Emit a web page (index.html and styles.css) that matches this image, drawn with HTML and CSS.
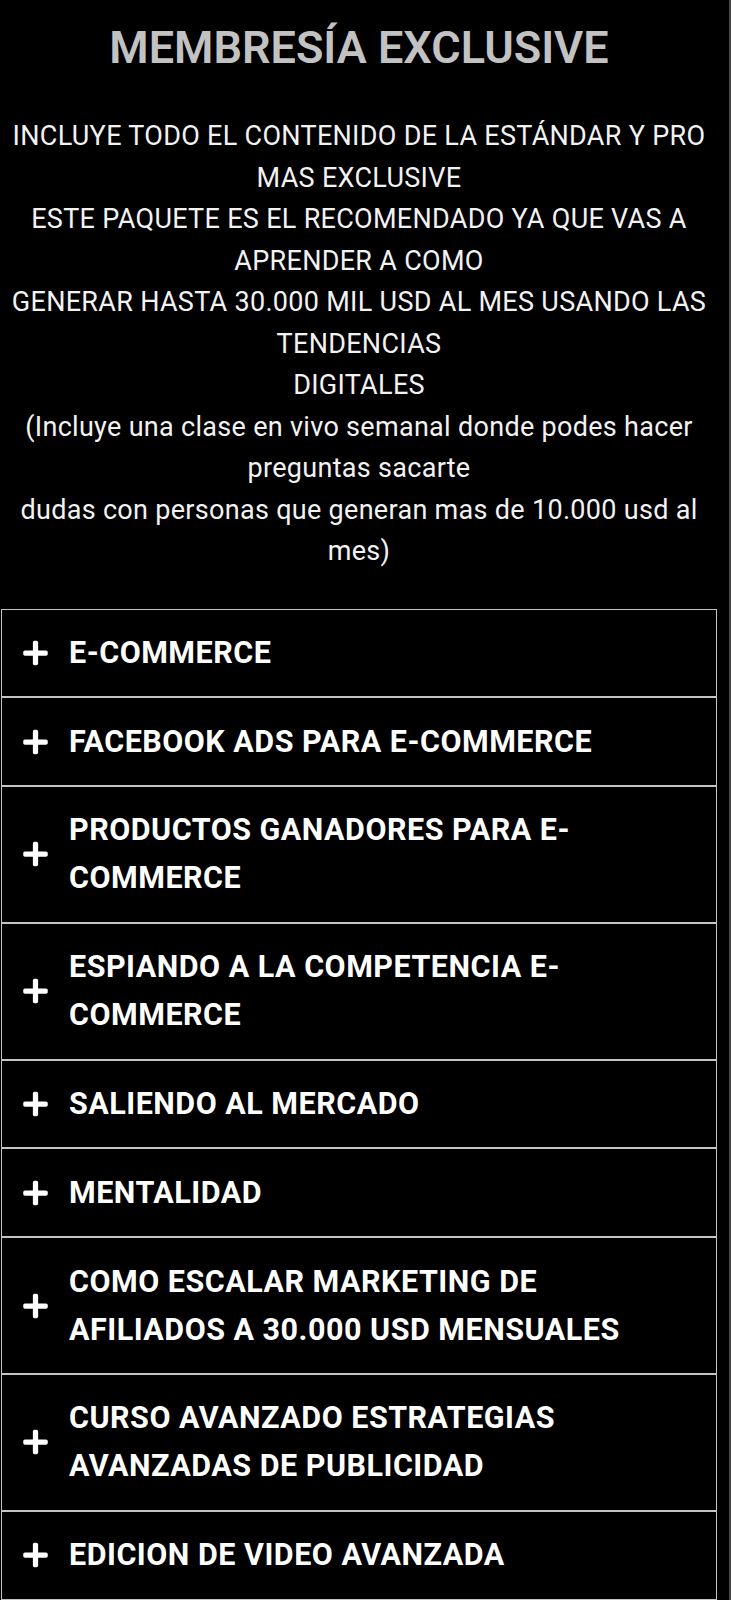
FILE: index.html
```html
<!DOCTYPE html>
<html lang="es">

<head>
    <meta charset="UTF-8">
    <meta name="viewport" content="width=device-width, initial-scale=1.0">
    <title>Membresía Exclusive</title>
    <link rel="stylesheet" href="styles.css">
</head>

<body>
    <div class="page">
        <h1 class="plan-title">MEMBRESÍA EXCLUSIVE</h1>
        <p class="plan-desc">
            INCLUYE TODO EL CONTENIDO DE LA ESTÁNDAR Y PRO MAS EXCLUSIVE<br>
            ESTE PAQUETE ES EL RECOMENDADO YA QUE VAS A APRENDER A COMO<br>
            GENERAR HASTA 30.000 MIL USD AL MES USANDO LAS TENDENCIAS<br>
            DIGITALES<br>
            (Incluye una clase en vivo semanal donde podes hacer preguntas sacarte<br>
            dudas con personas que generan mas de 10.000 usd al mes)
        </p>

        <div class="accordion">
            <div class="acc-item">
                <span class="acc-icon"><svg viewBox="0 0 448 512"><path d="M416 208H272V64c0-17.67-14.33-32-32-32h-32c-17.67 0-32 14.33-32 32v144H32c-17.67 0-32 14.33-32 32v32c0 17.67 14.33 32 32 32h144v144c0 17.67 14.33 32 32 32h32c17.67 0 32-14.33 32-32V304h144c17.67 0 32-14.33 32-32v-32c0-17.67-14.33-32-32-32z"/></svg></span>
                <span class="acc-title">E-COMMERCE</span>
            </div>
            <div class="acc-item">
                <span class="acc-icon"><svg viewBox="0 0 448 512"><path d="M416 208H272V64c0-17.67-14.33-32-32-32h-32c-17.67 0-32 14.33-32 32v144H32c-17.67 0-32 14.33-32 32v32c0 17.67 14.33 32 32 32h144v144c0 17.67 14.33 32 32 32h32c17.67 0 32-14.33 32-32V304h144c17.67 0 32-14.33 32-32v-32c0-17.67-14.33-32-32-32z"/></svg></span>
                <span class="acc-title">FACEBOOK ADS PARA E-COMMERCE</span>
            </div>
            <div class="acc-item">
                <span class="acc-icon"><svg viewBox="0 0 448 512"><path d="M416 208H272V64c0-17.67-14.33-32-32-32h-32c-17.67 0-32 14.33-32 32v144H32c-17.67 0-32 14.33-32 32v32c0 17.67 14.33 32 32 32h144v144c0 17.67 14.33 32 32 32h32c17.67 0 32-14.33 32-32V304h144c17.67 0 32-14.33 32-32v-32c0-17.67-14.33-32-32-32z"/></svg></span>
                <span class="acc-title">PRODUCTOS GANADORES PARA E-COMMERCE</span>
            </div>
            <div class="acc-item">
                <span class="acc-icon"><svg viewBox="0 0 448 512"><path d="M416 208H272V64c0-17.67-14.33-32-32-32h-32c-17.67 0-32 14.33-32 32v144H32c-17.67 0-32 14.33-32 32v32c0 17.67 14.33 32 32 32h144v144c0 17.67 14.33 32 32 32h32c17.67 0 32-14.33 32-32V304h144c17.67 0 32-14.33 32-32v-32c0-17.67-14.33-32-32-32z"/></svg></span>
                <span class="acc-title">ESPIANDO A LA COMPETENCIA E-COMMERCE</span>
            </div>
            <div class="acc-item">
                <span class="acc-icon"><svg viewBox="0 0 448 512"><path d="M416 208H272V64c0-17.67-14.33-32-32-32h-32c-17.67 0-32 14.33-32 32v144H32c-17.67 0-32 14.33-32 32v32c0 17.67 14.33 32 32 32h144v144c0 17.67 14.33 32 32 32h32c17.67 0 32-14.33 32-32V304h144c17.67 0 32-14.33 32-32v-32c0-17.67-14.33-32-32-32z"/></svg></span>
                <span class="acc-title">SALIENDO AL MERCADO</span>
            </div>
            <div class="acc-item">
                <span class="acc-icon"><svg viewBox="0 0 448 512"><path d="M416 208H272V64c0-17.67-14.33-32-32-32h-32c-17.67 0-32 14.33-32 32v144H32c-17.67 0-32 14.33-32 32v32c0 17.67 14.33 32 32 32h144v144c0 17.67 14.33 32 32 32h32c17.67 0 32-14.33 32-32V304h144c17.67 0 32-14.33 32-32v-32c0-17.67-14.33-32-32-32z"/></svg></span>
                <span class="acc-title">MENTALIDAD</span>
            </div>
            <div class="acc-item">
                <span class="acc-icon"><svg viewBox="0 0 448 512"><path d="M416 208H272V64c0-17.67-14.33-32-32-32h-32c-17.67 0-32 14.33-32 32v144H32c-17.67 0-32 14.33-32 32v32c0 17.67 14.33 32 32 32h144v144c0 17.67 14.33 32 32 32h32c17.67 0 32-14.33 32-32V304h144c17.67 0 32-14.33 32-32v-32c0-17.67-14.33-32-32-32z"/></svg></span>
                <span class="acc-title">COMO ESCALAR MARKETING DE AFILIADOS A 30.000 USD MENSUALES</span>
            </div>
            <div class="acc-item">
                <span class="acc-icon"><svg viewBox="0 0 448 512"><path d="M416 208H272V64c0-17.67-14.33-32-32-32h-32c-17.67 0-32 14.33-32 32v144H32c-17.67 0-32 14.33-32 32v32c0 17.67 14.33 32 32 32h144v144c0 17.67 14.33 32 32 32h32c17.67 0 32-14.33 32-32V304h144c17.67 0 32-14.33 32-32v-32c0-17.67-14.33-32-32-32z"/></svg></span>
                <span class="acc-title">CURSO AVANZADO ESTRATEGIAS AVANZADAS DE PUBLICIDAD</span>
            </div>
            <div class="acc-item">
                <span class="acc-icon"><svg viewBox="0 0 448 512"><path d="M416 208H272V64c0-17.67-14.33-32-32-32h-32c-17.67 0-32 14.33-32 32v144H32c-17.67 0-32 14.33-32 32v32c0 17.67 14.33 32 32 32h144v144c0 17.67 14.33 32 32 32h32c17.67 0 32-14.33 32-32V304h144c17.67 0 32-14.33 32-32v-32c0-17.67-14.33-32-32-32z"/></svg></span>
                <span class="acc-title">EDICION DE VIDEO AVANZADA</span>
            </div>
        </div>
    </div>
</body>

</html>
```

FILE: styles.css
```css
* {
    box-sizing: border-box;
}

body {
    margin: 0;
    background-color: #000;
    border-right: 2px solid #474747;
    font-family: Roboto, "Liberation Sans", sans-serif;
    color: #fff;
}

.page {
    width: 717px;
    padding-left: 1px;
}

.plan-title {
    margin: 21px 0 0;
    font-size: 45px;
    line-height: 54px;
    font-weight: 600;
    text-align: center;
    color: #c2c2c2;
}

.plan-desc {
    margin: 41px 0 0;
    font-size: 27px;
    line-height: 41.5px;
    letter-spacing: 0.3px;
    text-align: center;
    color: #f2f2f2;
}

.accordion {
    margin-top: 36px;
    border: 1px solid #c4c4c4;
    border-bottom: none;
}

.acc-item {
    display: flex;
    align-items: center;
    padding: 19.4px 20px 19.4px 21px;
    border-bottom: 2px solid #c4c4c4;
}

.acc-icon {
    flex: none;
    width: 25px;
    height: 28px;
    margin-right: 21px;
}

.acc-icon svg {
    display: block;
    width: 25px;
    height: 28px;
    fill: #fff;
}

.acc-title {
    font-size: 30.5px;
    line-height: 48px;
    letter-spacing: 0.5px;
    font-weight: 700;
    color: #fff;
}
```
